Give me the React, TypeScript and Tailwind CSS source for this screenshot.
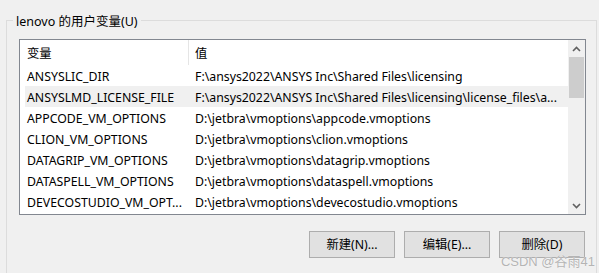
import React from "react";

const rows: [string, string][] = [
  ["ANSYSLIC_DIR", "F:\\ansys2022\\ANSYS Inc\\Shared Files\\licensing"],
  ["ANSYSLMD_LICENSE_FILE", "F:\\ansys2022\\ANSYS Inc\\Shared Files\\licensing\\license_files\\a..."],
  ["APPCODE_VM_OPTIONS", "D:\\jetbra\\vmoptions\\appcode.vmoptions"],
  ["CLION_VM_OPTIONS", "D:\\jetbra\\vmoptions\\clion.vmoptions"],
  ["DATAGRIP_VM_OPTIONS", "D:\\jetbra\\vmoptions\\datagrip.vmoptions"],
  ["DATASPELL_VM_OPTIONS", "D:\\jetbra\\vmoptions\\dataspell.vmoptions"],
  ["DEVECOSTUDIO_VM_OPT...", "D:\\jetbra\\vmoptions\\devecostudio.vmoptions"],
];

const font = { fontFamily: '"Noto Sans", "Noto Sans CJK SC", sans-serif' };

function Btn({ label }: { label: string }) {
  return (
    <button className="w-[86px] h-[27px] border border-[#adadad] bg-[#e1e1e1] text-[12.3px] text-black flex items-center justify-center pt-[1px]">
      {label}
    </button>
  );
}

export default function App() {
  return (
    <div className="relative w-[599px] h-[273px] bg-[#f0f0f0] overflow-hidden text-black" style={font}>
      <div className="pt-[20px] pl-[6px] pr-[2px]">
        <div className="relative border-l border-t border-r border-[#dcdcdc] h-[253px] pl-[12px] pt-[18px] pr-[10px]">
          <span className="absolute left-[6px] top-[-8px] bg-[#f0f0f0] px-[3px] text-[12.5px] leading-[18px]">
            lenovo 的用户变量(U)
          </span>
          <div className="flex w-[567px] h-[176px] border border-[#828790] bg-white">
            <div className="flex-1 flex flex-col pl-[5px] text-[12.3px]">
              <div className="flex h-[25px] items-center">
                <div className="w-[163px] pl-[2px] pt-[3px] flex items-center h-full">变量</div>
                <div className="w-px h-full bg-[#e5e5e5]"></div>
                <div className="pl-[6px] pt-[3px]">值</div>
              </div>
              {rows.map(([k, v], i) => (
                <div key={k} className={`flex h-[21px] items-center ${i === 1 ? "bg-[#f0f0f0]" : ""}`}>
                  <div className="w-[166px] pl-[2px] pt-[3px] whitespace-nowrap overflow-hidden">{k}</div>
                  <div className="flex-1 pl-[4px] pt-[3px] whitespace-nowrap overflow-hidden">{v}</div>
                </div>
              ))}
            </div>
            <div className="w-[17px] bg-[#f0f0f0] flex flex-col items-center">
              <div className="h-[17px] w-full flex items-center justify-center">
                <svg width="9" height="6" viewBox="0 0 9 6">
                  <path d="M1 5 L4.5 1.5 L8 5" fill="none" stroke="#606060" strokeWidth="1.6" />
                </svg>
              </div>
              <div className="w-[15px] h-[41px] bg-[#cdcdcd]"></div>
              <div className="flex-1"></div>
              <div className="h-[17px] w-full flex items-center justify-center">
                <svg width="9" height="6" viewBox="0 0 9 6">
                  <path d="M1 1 L4.5 4.5 L8 1" fill="none" stroke="#606060" strokeWidth="1.6" />
                </svg>
              </div>
            </div>
          </div>
          <div className="flex justify-end gap-[9px] mt-[16px] pr-[1px]">
            <Btn label="新建(N)..." />
            <Btn label="编辑(E)..." />
            <Btn label="删除(D)" />
          </div>
        </div>
      </div>
      <span
        className="absolute right-[4px] top-[252px] text-[13px] text-[#b4b4b4] whitespace-nowrap"
        style={{ fontFamily: '"Liberation Sans", "Noto Sans CJK SC", sans-serif', textShadow: "0 0 1px #fff" }}
      >
        CSDN @谷雨41
      </span>
    </div>
  );
}
